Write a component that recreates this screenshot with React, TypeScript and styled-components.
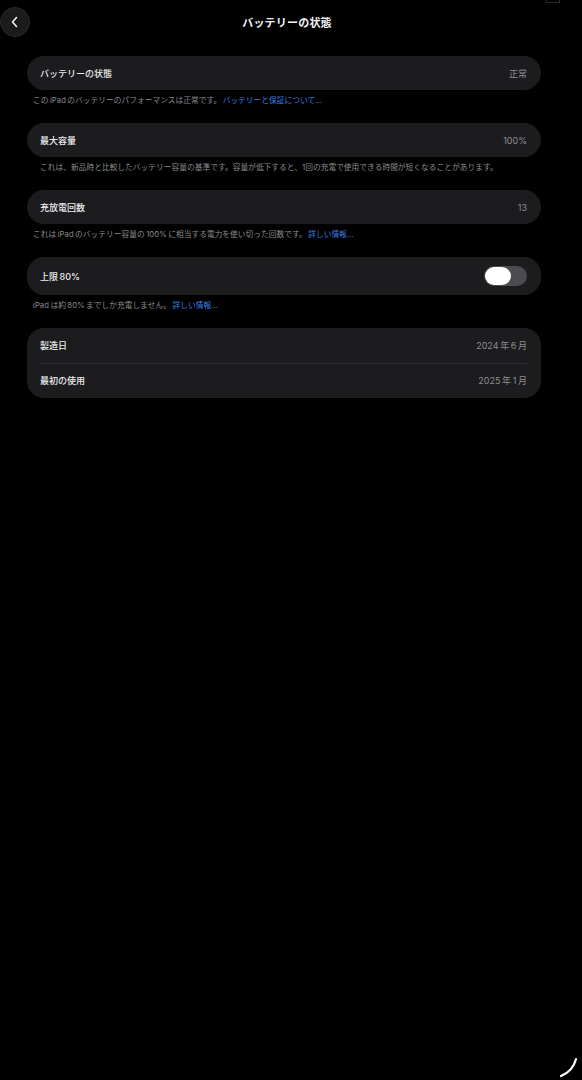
import React from "react";
import styled, { createGlobalStyle } from "styled-components";

const GlobalStyle = createGlobalStyle`
  html, body {
    margin: 0;
    padding: 0;
    background: #000;
    min-height: 100%;
  }
  body {
    font-family: "Inter", "Noto Sans CJK JP", "Noto Sans", sans-serif;
    color: #ececee;
    -webkit-font-smoothing: antialiased;
  }
`;

const Page = styled.div`
  position: relative;
  width: 582px;
  height: 1080px;
  background: #000;
  overflow: hidden;
`;

const Header = styled.header`
  display: grid;
  grid-template-columns: 60px 1fr 60px;
  align-items: center;
  height: 44px;
`;

const BackButton = styled.button`
  width: 30px;
  height: 30px;
  border-radius: 50%;
  border: 1px solid #2a2a2c;
  background: #1b1b1d;
  display: flex;
  align-items: center;
  justify-content: center;
  padding: 0;
  cursor: pointer;
`;

const Title = styled.h1`
  margin: 0;
  text-align: center;
  font-size: 11px;
  font-weight: 700;
  color: #f2f2f4;
  letter-spacing: 0.2px;
  padding-right: 8px;
`;

const Content = styled.main`
  padding: 12px 41px 0 27px;
  display: flex;
  flex-direction: column;
`;

const Section = styled.section`
  display: flex;
  flex-direction: column;
`;

const Card = styled.div`
  background: #1c1c1e;
  border-radius: 17px;
  display: flex;
  flex-direction: column;
`;

const Row = styled.div<{ $h?: number }>`
  height: ${(p) => p.$h ?? 34}px;
  display: flex;
  align-items: center;
  justify-content: space-between;
  padding: 0 14px 0 13px;
`;

const Divider = styled.div`
  height: 1px;
  background: #2e2e31;
  margin: 0 14px 0 13px;
`;

const Label = styled.span`
  font-size: 9px;
  font-weight: 500;
  color: #ededef;
`;

const Value = styled.span`
  font-size: 9px;
  color: #8d8d92;
`;

const Footer = styled.p<{ $indent?: number }>`
  margin: 0;
  padding: 6px 0 0 ${(p) => p.$indent ?? 6}px;
  height: 27px;
  box-sizing: content-box;
  font-size: 7.7px;
  line-height: 10px;
  color: #8b8b90;
  white-space: pre;
  letter-spacing: 0.05px;
`;

const Link = styled.a`
  color: #3d7ee6;
  text-decoration: none;
`;

const Toggle = styled.div`
  width: 43px;
  height: 20px;
  border-radius: 10px;
  background: #4c4c50;
  display: flex;
  align-items: center;
  padding: 0 1px;
  box-sizing: border-box;
`;

const Knob = styled.div`
  width: 26px;
  height: 18px;
  border-radius: 9px;
  background: #fff;
`;

const StatusMark = styled.div`
  position: absolute;
  top: 0;
  right: 22px;
  width: 12px;
  height: 2px;
  border-bottom: 1px solid #2a2a2c;
  border-left: 1px solid #2a2a2c;
  border-right: 1px solid #2a2a2c;
`;

const Corner = styled.svg`
  position: absolute;
  right: 2px;
  bottom: 2px;
`;

const T = "\u2009";

export default function App() {
  return (
    <>
      <GlobalStyle />
      <Page>
        <StatusMark />
        <Header>
          <BackButton aria-label="戻る">
            <svg width="10" height="12" viewBox="0 0 10 12" fill="none">
              <path
                d="M6.5 1.5 L2.5 6 L6.5 10.5"
                stroke="#f2f2f4"
                strokeWidth="1.6"
                strokeLinecap="round"
                strokeLinejoin="round"
              />
            </svg>
          </BackButton>
          <Title>バッテリーの状態</Title>
          <span />
        </Header>
        <Content>
          <Section>
            <Card>
              <Row>
                <Label>バッテリーの状態</Label>
                <Value>正常</Value>
              </Row>
            </Card>
            <Footer>
              {`この${T}iPad${T}のバッテリーのパフォーマンスは正常です。${T}`}
              <Link>バッテリーと保証について...</Link>
            </Footer>
          </Section>
          <Section>
            <Card>
              <Row>
                <Label>最大容量</Label>
                <Value>100%</Value>
              </Row>
            </Card>
            <Footer $indent={13}>
              {"これは、新品時と比較したバッテリー容量の基準です。容量が低下すると、1回の充電で使用できる時間が短くなることがあります。"}
            </Footer>
          </Section>
          <Section>
            <Card>
              <Row>
                <Label>充放電回数</Label>
                <Value>13</Value>
              </Row>
            </Card>
            <Footer>
              {`これは${T}iPad${T}のバッテリー容量の${T}100%${T}に相当する電力を使い切った回数です。${T}`}
              <Link>詳しい情報...</Link>
            </Footer>
          </Section>
          <Section>
            <Card>
              <Row $h={38}>
                <Label>{`上限${T}80%`}</Label>
                <Toggle>
                  <Knob />
                </Toggle>
              </Row>
            </Card>
            <Footer>
              {`iPad${T}は約${T}80%${T}までしか充電しません。${T}`}
              <Link>詳しい情報...</Link>
            </Footer>
          </Section>
          <Section>
            <Card>
              <Row $h={34.5}>
                <Label>製造日</Label>
                <Value>{`2024${T}年${T}6${T}月`}</Value>
              </Row>
              <Divider />
              <Row $h={34}>
                <Label>最初の使用</Label>
                <Value>{`2025${T}年${T}1${T}月`}</Value>
              </Row>
            </Card>
          </Section>
        </Content>
        <Corner width="22" height="22" viewBox="0 0 22 22" fill="none">
          <path
            d="M3 20 Q15 15 18 3"
            stroke="#ffffff"
            strokeWidth="2.2"
            strokeLinecap="round"
          />
        </Corner>
      </Page>
    </>
  );
}
